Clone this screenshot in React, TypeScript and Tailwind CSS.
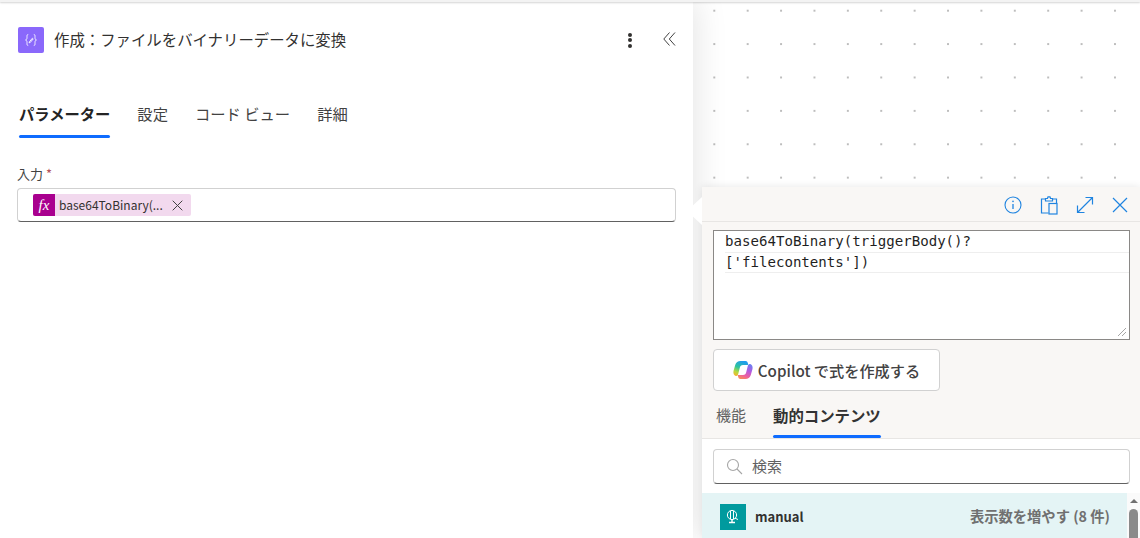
const JP = `font-['Segoe_UI','Noto_Sans_CJK_JP','Noto_Sans',sans-serif]`

function ComposeIcon() {
  return (
    <svg width="14" height="14" viewBox="0 0 14 14" fill="none" stroke="#fff" strokeWidth="0.9">
      <path d="M4.2 1.5C2.8 1.5 3 3 3 4.5S2.6 6.6 1.6 7C2.6 7.4 3 8 3 9.5s-.2 3 1.2 3" />
      <path d="M9.8 1.5c1.4 0 1.2 1.5 1.2 3s.4 2.1 1.4 2.5c-1 .4-1.4 1-1.4 2.5s.2 3-1.2 3" />
      <path d="M5.4 8.8 8.4 5.2l.8.7-3 3.6-1.1.3z" />
    </svg>
  )
}

function ManualIcon() {
  return (
    <svg width="16" height="16" viewBox="0 0 16 16" fill="none" stroke="#fff" strokeWidth="1">
      <circle cx="7" cy="6" r="4.6" />
      <path d="M5.5 2v8M8.5 2v8" />
      <path d="M10 9.2l3 1.3" />
      <path d="M4 13.5h6M7 11v2.5" strokeWidth="1.4" />
    </svg>
  )
}

function CopilotIcon() {
  return (
    <svg width="20" height="20" viewBox="0 0 20 20">
      <defs>
        <linearGradient id="cpa" x1="0.6" y1="0" x2="0.2" y2="1">
          <stop offset="0" stopColor="#1f9bf0" />
          <stop offset="0.45" stopColor="#2fc59a" />
          <stop offset="0.75" stopColor="#b6d93f" />
          <stop offset="1" stopColor="#f7b32e" />
        </linearGradient>
        <linearGradient id="cpb" x1="0.7" y1="0" x2="0.3" y2="1">
          <stop offset="0" stopColor="#6d7df0" />
          <stop offset="0.4" stopColor="#b45be0" />
          <stop offset="0.75" stopColor="#ee5fa0" />
          <stop offset="1" stopColor="#f78a5c" />
        </linearGradient>
      </defs>
      <path d="M7.5 1h5c1.4 0 2 .8 2.3 2l.5 2H10C8 5 7.3 6 6.8 7.8l-1.5 6c-.4 1.6-1.2 2.6-2.6 2.2C1 15.5 0 13.5 0.5 11L2.2 5C3 2.5 5 1 7.5 1z" fill="url(#cpa)" />
      <path d="M12.5 19h-5c-1.4 0-2-.8-2.3-2l-.5-2H10c2 0 2.7-1 3.2-2.8l1.5-6c.4-1.6 1.2-2.6 2.6-2.2 1.7.5 2.7 2.5 2.2 5L17.8 15c-.8 2.5-2.8 4-5.3 4z" fill="url(#cpb)" />
    </svg>
  )
}

function PanelIcons() {
  const blue = '#1f84e0'
  return (
    <div className="flex items-center gap-[16px] pr-[11px]">
      <svg width="20" height="20" viewBox="0 0 20 20" fill="none" stroke={blue} strokeWidth="1.1">
        <circle cx="10" cy="10" r="8" />
        <path d="M10 9v5" strokeWidth="1.3" />
        <circle cx="10" cy="6.4" r="0.8" fill={blue} stroke="none" />
      </svg>
      <svg width="20" height="20" viewBox="0 0 20 20" fill="none" stroke={blue} strokeWidth="1.2">
        <path d="M6.5 4H2.5v14h7" />
        <path d="M13.5 4h4v4" />
        <path d="M6.5 6V3.5h2l.5-1.6h2l.5 1.6h2V6z" />
        <rect x="10" y="8.5" width="8" height="10.5" fill="#f8f6f4" />
      </svg>
      <svg width="20" height="20" viewBox="0 0 20 20" fill="none" stroke={blue} strokeWidth="1.2">
        <path d="M3 17 17 3M10.5 2.5h7v7M2.5 10.5v7h7" />
      </svg>
      <svg width="18" height="18" viewBox="0 0 18 18" fill="none" stroke={blue} strokeWidth="1.2">
        <path d="M2 2l14 14M16 2 2 16" />
      </svg>
    </div>
  )
}

const TABS = ['パラメーター', '設定', 'コード ビュー', '詳細']

export default function App() {
  return (
    <div className={`relative h-[538px] w-[1140px] overflow-hidden bg-white ${JP}`}>
      <div className="flex h-full">
        {/* left panel */}
        <div className="z-10 flex w-[693px] shrink-0 flex-col bg-white shadow-[4px_0_30px_rgba(0,0,0,0.1)]">
          <div className="flex h-[26px] shrink-0" />
          <div className="flex h-[28px] items-center pl-[18px]">
            <div className="flex h-[26px] w-[26px] items-center justify-center rounded-[2px] bg-[#8a68fb]">
              <ComposeIcon />
            </div>
            <span className="ml-[10px] text-[15.4px] text-[#323130]">作成：ファイルをバイナリーデータに変換</span>
            <div className="ml-auto mr-[61px] flex flex-col gap-[1.5px]">
              <span className="h-[4px] w-[4px] rounded-full bg-[#323130]" />
              <span className="h-[4px] w-[4px] rounded-full bg-[#323130]" />
              <span className="h-[4px] w-[4px] rounded-full bg-[#323130]" />
            </div>
          </div>
          <div className="mt-[32px] flex gap-[27px] pl-[19px]">
            {TABS.map((t, i) => (
              <div key={t} className="flex h-[52px] flex-col pt-[15px]">
                <span className={i === 0 ? 'text-[15.3px] font-bold leading-[24px] text-[#242424]' : 'text-[15.3px] leading-[24px] text-[#424242]'}>{t}</span>
                {i === 0 && <span className="mt-auto h-[3px] rounded-full bg-[#0f6cff]" />}
              </div>
            ))}
          </div>
          <div className="mt-[27px] pl-[17px] pr-[17px]">
            <div className="h-[20px] text-[13px] leading-[18px] text-[#424242]">
              入力 <span className="text-[#b4535a]">*</span>
            </div>
            <div className="mt-[3px] flex h-[34px] items-center rounded-[4px] border border-[#d1d1d1] border-b-[#616161] pl-[15px]">
              <div className="flex h-[22px] w-[158px] items-center overflow-hidden rounded-[2px] bg-[#f2d9ee]">
                <span className="flex h-[22px] w-[22px] items-center justify-center bg-[#a9008f] font-['Liberation_Serif',serif] text-[15px] italic text-white">fx</span>
                <span className="ml-[4px] w-[109px] text-[12px] text-[#323130]">base64ToBinary(...</span>
                <svg className="ml-[4px]" width="11" height="11" viewBox="0 0 11 11" stroke="#424242" strokeWidth="1" fill="none">
                  <path d="M.7.7l9.6 9.6M10.3.7.7 10.3" />
                </svg>
              </div>
            </div>
          </div>
        </div>
        {/* canvas */}
        <div className="flex-1 bg-white bg-[radial-gradient(#bdbdbd_1px,transparent_1.3px)] [background-position:4.6px_-6px] [background-size:33.4px_33.4px]" />
      </div>

      {/* collapse chevrons, on the panel edge */}
      <svg className="absolute left-[663px] top-[32px] z-20" width="13" height="14" viewBox="0 0 13 14" fill="none" stroke="#424242" strokeWidth="1">
        <path d="M6.5.5.8 7l5.7 6.5M12 .5 6.3 7l5.7 6.5" />
      </svg>

      {/* top bar */}
      <div className="absolute inset-x-0 top-0 z-20 h-[2px] bg-[#f3f3f3] shadow-[0_1px_2px_rgba(0,0,0,0.18)]" />

      {/* expression popup */}
      <div className="absolute left-[702px] top-[187px] z-30 flex h-[351px] w-[438px] flex-col bg-[#f9f7f5] shadow-[0_0_8px_rgba(0,0,0,0.1)]">
        <div className="absolute left-[-15px] top-[10px] h-0 w-0 border-y-[14px] border-r-[15px] border-y-transparent border-r-white" />
        <div className="flex h-[35px] shrink-0 items-center justify-end border-b border-[#e8e6e4] pt-[2px]">
          <PanelIcons />
        </div>
        <div className="px-[11px] pt-[8px]">
          <div className="relative h-[110px] w-[417px] border border-[#8a8886] bg-white pl-[11px] font-['DejaVu_Sans_Mono','Liberation_Mono',monospace] text-[14.1px] leading-[21px] text-[#1f1f1f]">
            <div>base64ToBinary(triggerBody()?</div>
            <div className="border-y border-[#eeeeee] leading-[19px]">['filecontents'])</div>
            <svg className="absolute bottom-[2px] right-[2px]" width="10" height="10" viewBox="0 0 10 10" stroke="#a6a6a6" fill="none">
              <path d="M1 9l8-8M5 9l4-4" />
            </svg>
          </div>
          <button className="mt-[9px] flex h-[42px] w-[227px] items-center justify-center gap-[5px] rounded-[4px] border border-[#d1d1d1] bg-white text-[15.2px] font-medium text-[#424242]">
            <CopilotIcon />
            <span>Copilot で式を作成する</span>
          </button>
        </div>
        <div className="mt-[1px] flex h-[47px] shrink-0 gap-[27px] border-b border-[#e8e6e4] pl-[14px]">
          <div className="pt-[12px] text-[15px] leading-[22px] text-[#616161]">機能</div>
          <div className="flex flex-col pt-[12px]">
            <span className="text-[15.4px] font-bold leading-[22px] text-[#333333]">動的コンテンツ</span>
            <span className="mt-auto h-[3px] rounded-full bg-[#0f6cff]" />
          </div>
        </div>
        <div className="flex flex-1 flex-col bg-white">
          <div className="px-[11px] pt-[10px]">
            <div className="flex h-[35px] w-[417px] items-center rounded-[4px] border border-[#d1d1d1] border-b-[#616161] pl-[12px]">
              <svg width="17" height="17" viewBox="0 0 17 17" fill="none" stroke="#a6a6a6" strokeWidth="1.1">
                <circle cx="7" cy="7" r="5.5" />
                <path d="M11 11l5 5" />
              </svg>
              <span className="ml-[9px] text-[15px] text-[#616161]">検索</span>
            </div>
          </div>
          <div className="mt-[9px] flex flex-1">
            <div className="flex h-[45px] flex-1 items-start bg-[#e4f4f5] pl-[18px] pr-[17px] pt-[11px]">
              <span className="flex h-[26px] w-[26px] items-center justify-center bg-[#009a9e]">
                <ManualIcon />
              </span>
              <span className="ml-[9px] text-[13px] font-semibold leading-[26px] text-[#323130]">manual</span>
              <span className="ml-auto text-[14.3px] font-semibold leading-[24px] text-[#707070]">表示数を増やす (8 件)</span>
            </div>
            <div className="flex w-[13px] flex-col items-center bg-[#fafafa]">
              <span className="mt-[6px] h-0 w-0 border-x-[4px] border-b-[4px] border-x-transparent border-b-[#707070]" />
              <span className="mt-[6px] h-[40px] w-[9px] rounded-full bg-[#8a8a8a]" />
            </div>
          </div>
        </div>
      </div>
    </div>
  )
}
